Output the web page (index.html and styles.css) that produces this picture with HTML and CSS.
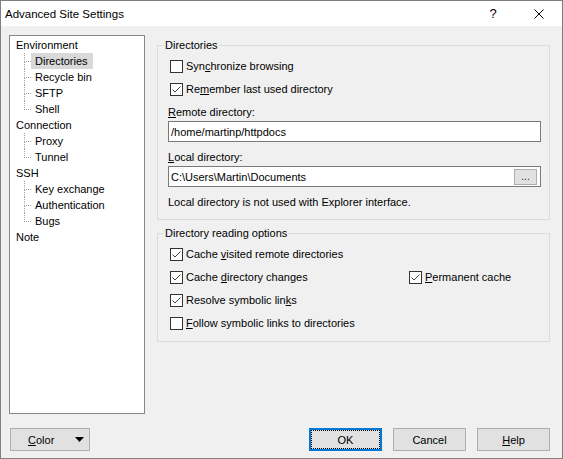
FILE: index.html
```html
<!DOCTYPE html>
<html lang="en">
<head>
    <meta charset="UTF-8">
    <title>Advanced Site Settings</title>
    <link rel="stylesheet" href="styles.css">
</head>
<body>
    <div class="window">
        <div class="titlebar">
            <span class="title">Advanced Site Settings</span>
            <span class="caption-btn">?</span>
            <span class="caption-btn">
                <svg width="10" height="10" viewBox="0 0 10 10"><path d="M0.5 0.5 L9.5 9.5 M9.5 0.5 L0.5 9.5" stroke="#000" stroke-width="1" fill="none"/></svg>
            </span>
        </div>

        <div class="dialog">
            <div class="main">
                <ul class="tree">
                    <li><span class="node">Environment</span>
                        <ul>
                            <li><span class="node selected">Directories</span></li>
                            <li><span class="node">Recycle bin</span></li>
                            <li><span class="node">SFTP</span></li>
                            <li><span class="node">Shell</span></li>
                        </ul>
                    </li>
                    <li><span class="node">Connection</span>
                        <ul>
                            <li><span class="node">Proxy</span></li>
                            <li><span class="node">Tunnel</span></li>
                        </ul>
                    </li>
                    <li><span class="node">SSH</span>
                        <ul>
                            <li><span class="node">Key exchange</span></li>
                            <li><span class="node">Authentication</span></li>
                            <li><span class="node">Bugs</span></li>
                        </ul>
                    </li>
                    <li><span class="node">Note</span></li>
                </ul>

                <div class="panel">
                    <fieldset class="group">
                        <legend>Directories</legend>
                        <div class="group-body">
                            <div class="check"><span class="box"></span><span>Syn<u>c</u>hronize browsing</span></div>
                            <div class="check"><span class="box checked"><svg width="11" height="11" viewBox="0 0 11 11"><path d="M1.5 5.5 L4 8 L9.5 2.5" stroke="#444" stroke-width="1" fill="none"/></svg></span><span>Re<u>m</u>ember last used directory</span></div>
                            <div class="field-label"><u>R</u>emote directory:</div>
                            <div class="edit"><span class="edit-text">/home/martinp/httpdocs</span></div>
                            <div class="field-label second"><u>L</u>ocal directory:</div>
                            <div class="edit"><span class="edit-text">C:\Users\Martin\Documents</span><span class="browse">...</span></div>
                            <div class="note">Local directory is not used with Explorer interface.</div>
                        </div>
                    </fieldset>

                    <fieldset class="group reading">
                        <legend>Directory reading options</legend>
                        <div class="group-body">
                            <div class="check"><span class="box checked"><svg width="11" height="11" viewBox="0 0 11 11"><path d="M1.5 5.5 L4 8 L9.5 2.5" stroke="#444" stroke-width="1" fill="none"/></svg></span><span>Cache <u>v</u>isited remote directories</span></div>
                            <div class="check-row">
                                <div class="check wide"><span class="box checked"><svg width="11" height="11" viewBox="0 0 11 11"><path d="M1.5 5.5 L4 8 L9.5 2.5" stroke="#444" stroke-width="1" fill="none"/></svg></span><span>Cache <u>d</u>irectory changes</span></div>
                                <div class="check"><span class="box checked"><svg width="11" height="11" viewBox="0 0 11 11"><path d="M1.5 5.5 L4 8 L9.5 2.5" stroke="#444" stroke-width="1" fill="none"/></svg></span><span><u>P</u>ermanent cache</span></div>
                            </div>
                            <div class="check"><span class="box checked"><svg width="11" height="11" viewBox="0 0 11 11"><path d="M1.5 5.5 L4 8 L9.5 2.5" stroke="#444" stroke-width="1" fill="none"/></svg></span><span>Resolve symbolic lin<u>k</u>s</span></div>
                            <div class="check"><span class="box"></span><span><u>F</u>ollow symbolic links to directories</span></div>
                        </div>
                    </fieldset>
                </div>
            </div>

            <div class="footer">
                <div class="btn color-btn"><span><u>C</u>olor</span>
                    <svg class="arrow" width="9" height="5" viewBox="0 0 9 5"><path d="M0 0 H9 L4.5 5 Z" fill="#000"/></svg>
                </div>
                <div class="spacer"></div>
                <div class="btn default">OK</div>
                <div class="btn">Cancel</div>
                <div class="btn"><span><u>H</u>elp</span></div>
            </div>
        </div>
    </div>
</body>
</html>
```

FILE: styles.css
```css
html, body {
    margin: 0;
    padding: 0;
}
body {
    font-family: "Segoe UI", "Liberation Sans", Arial, sans-serif;
    font-size: 11px;
    color: #000;
    background: #f0f0f0;
}
.window {
    width: 563px;
    height: 459px;
    box-sizing: border-box;
    border: 1px solid #808080;
    background: #f0f0f0;
    display: flex;
    flex-direction: column;
}
.titlebar {
    height: 25px;
    background: #fff;
    display: flex;
    align-items: center;
}
.title {
    flex: 1;
    padding-left: 4px;
    font-size: 11.5px;
}
.caption-btn {
    width: 46px;
    height: 25px;
    display: flex;
    align-items: center;
    justify-content: center;
    font-size: 13px;
}
.dialog {
    flex: 1;
    display: flex;
    flex-direction: column;
    padding: 9px 12px 7px 8px;
}
.main {
    display: flex;
    gap: 12px;
    height: 379px;
}

/* tree view */
.tree {
    width: 136px;
    box-sizing: border-box;
    margin: 0;
    padding: 1px 0 0 2px;
    list-style: none;
    background: #fff;
    border: 1px solid #828790;
}
.tree ul {
    list-style: none;
    margin: 0;
    padding-left: 19px;
}
.tree li {
    line-height: 16px;
}
.tree ul li {
    position: relative;
}
.tree ul li::before {
    content: '';
    position: absolute;
    left: -7px;
    top: 0;
    width: 6px;
    height: 8px;
    border-left: 1px dotted #a0a0a0;
    border-bottom: 1px dotted #a0a0a0;
}
.tree ul li:not(:last-child)::after {
    content: '';
    position: absolute;
    left: -7px;
    top: 8px;
    bottom: 0;
    border-left: 1px dotted #a0a0a0;
}
.node {
    display: inline-block;
    height: 16px;
    padding: 0 5px 0 4px;
}
.node.selected {
    background: #d9d9d9;
}

/* right panel */
.panel {
    flex: 1;
    padding-top: 2px;
}
.group {
    margin: 0;
    padding: 0;
    border: 1px solid #dcdcdc;
    min-width: 0;
}
.group legend {
    margin-left: 5px;
    padding: 0 1px 0 2px;
    line-height: 16px;
}
.group.reading {
    margin-top: 5px;
}
.group-body {
    padding: 5px 8px 9px 10px;
}
.group.reading .group-body {
    padding-bottom: 10px;
}
.check {
    display: flex;
    align-items: center;
    height: 16px;
    padding-left: 2px;
    margin-bottom: 7px;
    white-space: pre;
}
.check:last-child {
    margin-bottom: 0;
}
.check-row {
    display: flex;
    margin-bottom: 7px;
}
.check-row .check {
    margin-bottom: 0;
}
.check.wide {
    width: 237px;
}
.box {
    width: 13px;
    height: 13px;
    box-sizing: border-box;
    border: 1px solid #333;
    background: #fff;
    margin-right: 3px;
    display: flex;
    align-items: center;
    justify-content: center;
    flex-shrink: 0;
}
.field-label {
    height: 16px;
    line-height: 16px;
    margin-bottom: 1px;
}
.field-label.second {
    margin-top: 7px;
}
.edit {
    height: 21px;
    box-sizing: border-box;
    border: 1px solid #7a7a7a;
    background: #fff;
    display: flex;
    align-items: center;
    padding: 0 3px 0 2px;
}
.edit-text {
    flex: 1;
}
.browse {
    width: 23px;
    height: 16px;
    box-sizing: border-box;
    border: 1px solid #adadad;
    background: #e1e1e1;
    display: flex;
    align-items: center;
    justify-content: center;
    font-size: 10px;
    line-height: 10px;
    color: #1a1a50;
}
.note {
    margin-top: 7px;
    height: 16px;
    line-height: 16px;
}

/* buttons */
.footer {
    display: flex;
    align-items: center;
    gap: 11px;
    margin-top: 14px;
    height: 23px;
}
.spacer {
    flex: 1;
}
.btn {
    width: 73px;
    height: 23px;
    box-sizing: border-box;
    border: 1px solid #adadad;
    background: #e1e1e1;
    display: flex;
    align-items: center;
    justify-content: center;
}
.btn.default {
    border-color: #0078d7;
    box-shadow: inset 0 0 0 1px #0078d7;
    outline: 1px dotted #000;
    outline-offset: -3px;
}
.color-btn {
    width: 80px;
    margin-left: 1px;
    justify-content: flex-start;
    padding: 0 5px 0 17px;
}
.color-btn .arrow {
    margin-left: auto;
}
```
